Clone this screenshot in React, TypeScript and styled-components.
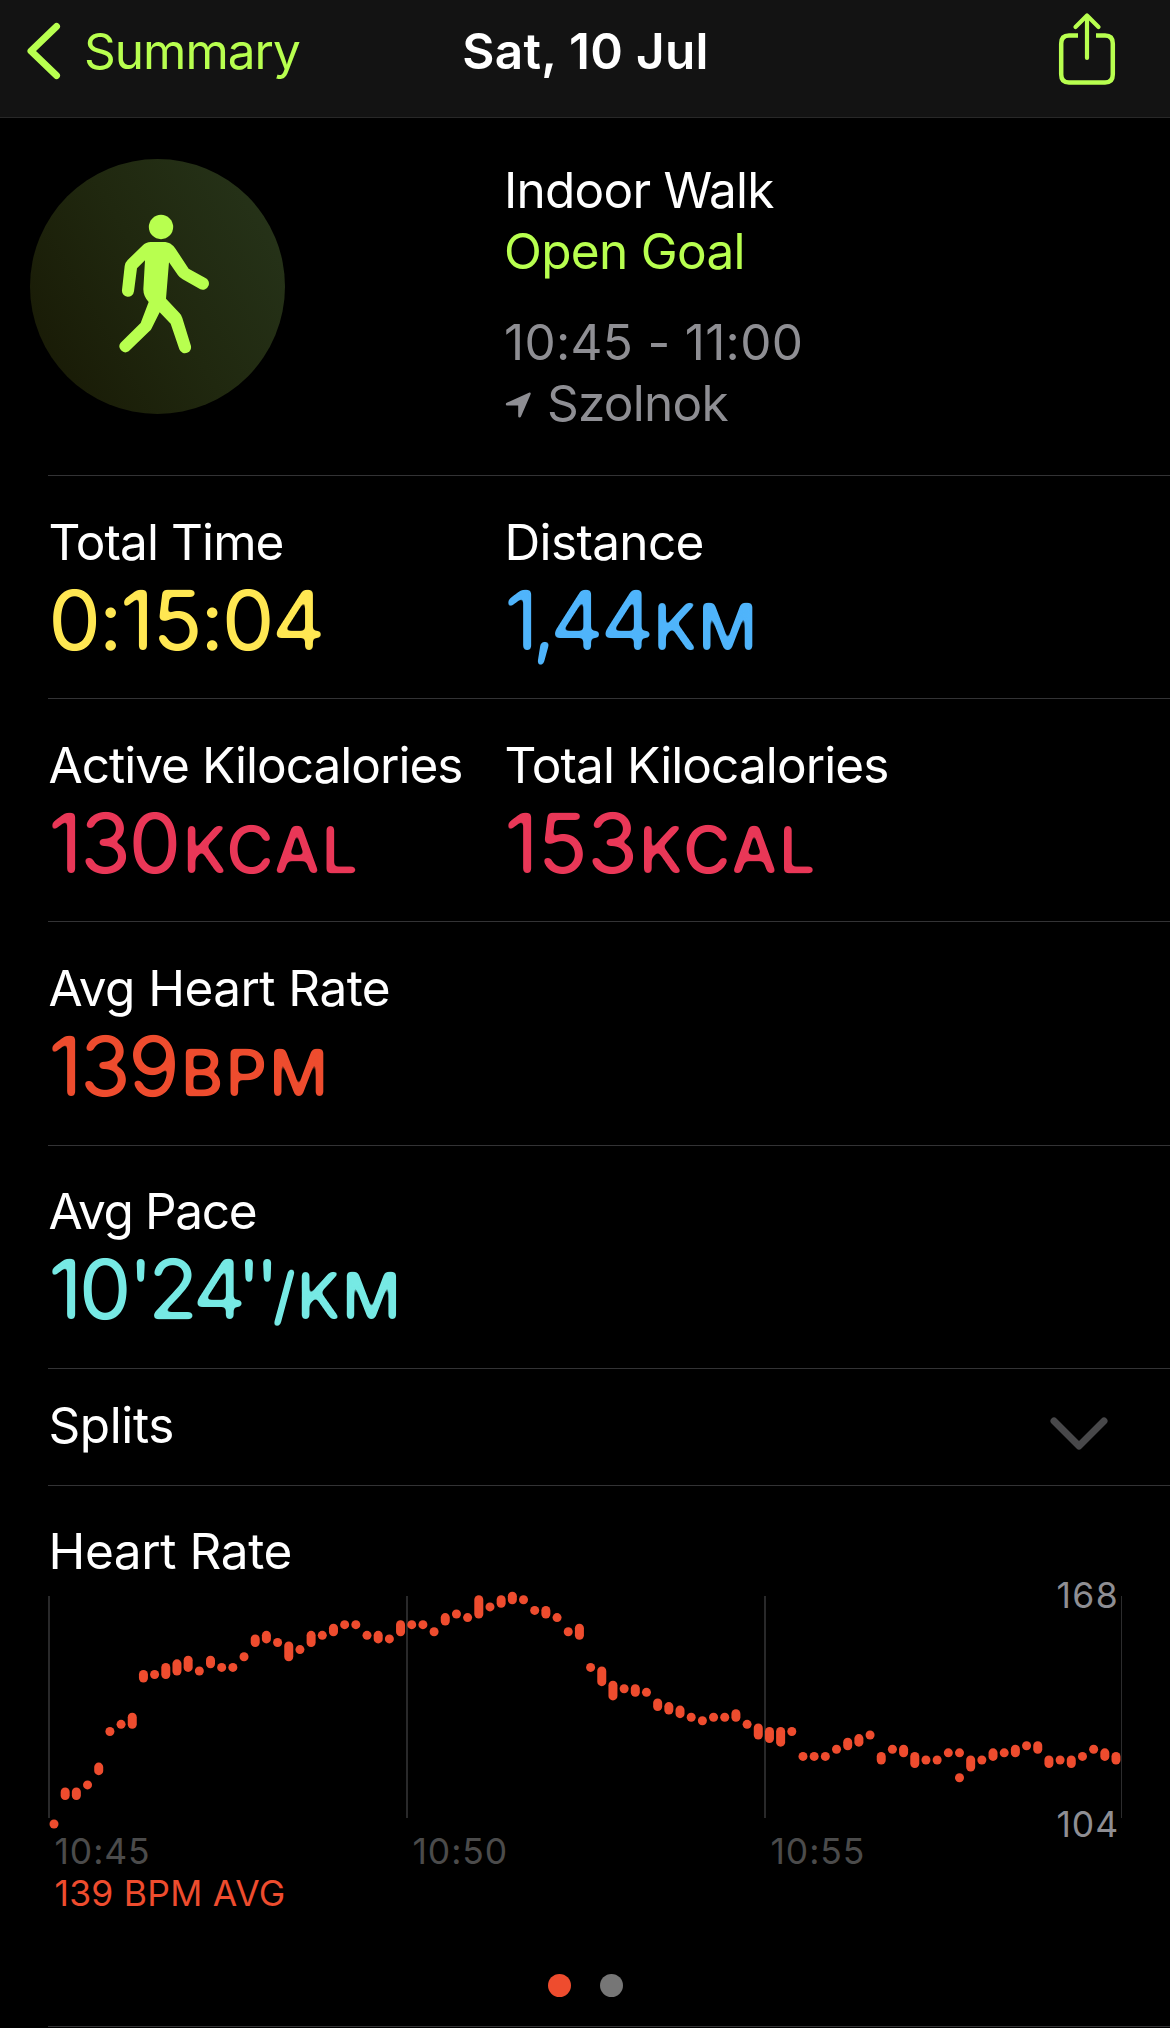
import React from 'react';
import styled, { createGlobalStyle } from 'styled-components';

const GlobalStyle = createGlobalStyle`
  * { box-sizing: border-box; }
  body {
    margin: 0;
    background: #000;
    font-family: Inter, "Liberation Sans", sans-serif;
    color: #fff;
  }
`;

const LIME = '#b8ff4f';
const ORANGE = '#ee4c2e';
const GREY = '#8e8e93';
const LINE = '#333335';

const Screen = styled.main`
  width: 1170px;
  height: 2028px;
  overflow: hidden;
  display: flex;
  flex-direction: column;
  background: #000;
`;

const NavBar = styled.header`
  height: 118px;
  flex: none;
  display: grid;
  grid-template-columns: 1fr auto 1fr;
  align-items: start;
  background: #131313;
  border-bottom: 1px solid #282828;
`;

const BackButton = styled.div`
  display: flex;
  align-items: center;
  gap: 22px;
  height: 102px;
  padding-left: 26px;
`;

const ShareButton = styled.div`
  justify-self: end;
  padding: 11px 53px 0 0;
  line-height: 0;
`;

const Text = styled.span<{ $color?: string; $track?: number; $weight?: number }>`
  display: block;
  white-space: nowrap;
  font-size: 49.5px;
  line-height: 60px;
  font-weight: ${(p) => p.$weight ?? 400};
  color: ${(p) => p.$color ?? '#fff'};
  letter-spacing: ${(p) => p.$track ?? 0}px;
`;

const NavTitle = styled(Text)`
  margin: 21px 0 0 1px;
`;

const Workout = styled.section`
  height: 357px;
  flex: none;
  display: grid;
  grid-template-columns: 474px 1fr;
  padding: 41px 0 0 30px;
`;

const Badge = styled.div`
  width: 255px;
  height: 255px;
  border-radius: 50%;
  background: linear-gradient(60deg, #191b06 10%, #20280f 50%, #263319 92%);
`;

const Details = styled.div`
  display: flex;
  flex-direction: column;
`;

const DetailLine = styled.div<{ $gap?: number }>`
  display: flex;
  align-items: center;
  gap: 16px;
  height: 61px;
  margin-top: ${(p) => p.$gap ?? 0}px;
`;

const LocationArrow = styled.svg`
  margin: 4px 0 0 1px;
`;

const Divided = styled.section<{ $height: number }>`
  flex: none;
  height: ${(p) => p.$height}px;
  margin-left: 48px;
  border-top: 1px solid ${LINE};
`;

const StatRow = styled(Divided)<{ $top: number }>`
  display: grid;
  grid-template-columns: 456px 1fr;
  padding: ${(p) => p.$top}px 0 0 0.5px;
`;

const Stat = styled.div`
  display: flex;
  flex-direction: column;
  gap: 6px;
`;

const Value = styled.div<{ $color: string; $track: number }>`
  height: 84px;
  line-height: 84px;
  font-size: 83px;
  white-space: nowrap;
  color: ${(p) => p.$color};
  letter-spacing: ${(p) => p.$track}px;
  filter: url(#rounded-ends);
`;

const Tight = styled.span<{ $by: number }>`
  letter-spacing: ${(p) => -p.$by}px;
`;

const Unit = styled.span<{ $track: number; $lead: number }>`
  font-size: 65px;
  font-weight: 500;
  line-height: 60px;
  margin-left: ${(p) => p.$lead}px;
  letter-spacing: ${(p) => p.$track}px;
`;

const SplitsRow = styled(Divided)`
  display: flex;
  justify-content: space-between;
  padding: 26px 60px 0 0.5px;
`;

const SplitsChevron = styled.svg`
  margin-top: 20px;
`;

const ChartSection = styled(Divided)`
  padding: 35px 48px 0 0;
  display: flex;
  flex-direction: column;
`;

const ChartHead = styled.div`
  height: 75px;
  padding-left: 0.5px;
`;

const Plot = styled.div`
  display: grid;
  height: 222px;
  width: 1074px;

  > * { grid-area: 1 / 1; }
`;

const PlotSvg = styled.svg`
  overflow: visible;
`;

const Scale = styled.div`
  display: flex;
  flex-direction: column;
  justify-content: space-between;
  align-items: flex-end;
  margin: -22px 3px -29px 0;
`;

const Small = styled.span<{ $color: string; $track?: number }>`
  display: block;
  white-space: nowrap;
  font-size: 35.5px;
  line-height: 44px;
  color: ${(p) => p.$color};
  letter-spacing: ${(p) => p.$track ?? 0.9}px;
`;

const TimeAxis = styled.div`
  display: grid;
  grid-template-columns: 358px 358px 1fr;
  padding: 12px 0 0 6.5px;
`;

const AverageLine = styled.div`
  margin: -2px 0 0 6.5px;
`;

const Pager = styled.div`
  display: flex;
  justify-content: center;
  gap: 29px;
  margin: 58px 0 0 0.5px;
`;

const PageDot = styled.i<{ $active?: boolean }>`
  width: 23px;
  height: 23px;
  border-radius: 50%;
  background: ${(p) => (p.$active ? ORANGE : '#767676')};
`;

/* Each sample: [high, low] beats per minute; a single number is a steady reading. */
type Sample = number | [number, number];
const SAMPLES: Sample[] = [
  104, [113, 112], [113, 112], 115, [120, 119], 130, 132, [134, 132], [146, 145], 146,
  [148, 146], [149, 147], [150, 148], 147, [150, 149], 148, 148, 151, [156, 155], [157, 156],
  155, [154, 151], 153, [157, 155], 157, [159, 158], 160, 160, 157, [157, 156],
  156, [160, 158], 160, 160, 158, [162, 161], 163, 162, [167, 163], 165,
  [167, 166], [168, 167], 167, 164, [164, 163], 162, 158, [159, 157], 148, [147, 144],
  [143, 140], 142, [142, 141], 141, [138, 137], [137, 136], [136, 135], 134, 133, 134,
  134, [135, 134], 132, [131, 129], [130, 128], [130, 127], 130, 123, 123, 123,
  125, [127, 126], [128, 127], 129, [123, 122], 125, [125, 124], [123, 121], 122, 122,
  124, 124, [122, 120], 122, [124, 123], 124, [125, 124], 126, [126, 125], [122, 121],
  122, [122, 121], 123, 125, [124, 123], [123, 122],
];
const OUTLIERS: [number, number][] = [[81, 117]];

const sampleX = (i: number) => 6 + i * (1062 / 95);
const bpmY = (bpm: number) => 0.2 + (168 - bpm) * 3.56;

function HeartRatePlot() {
  const marks: [number, number, number][] = [
    ...SAMPLES.map((s, i): [number, number, number] =>
      typeof s === 'number' ? [i, s, s] : [i, s[0], s[1]]),
    ...OUTLIERS.map(([i, b]): [number, number, number] => [i, b, b]),
  ];
  return (
    <PlotSvg width="1074" height="222" viewBox="0 0 1074 222">
      {[0, 358, 716].map((x) => (
        <rect key={x} x={x} y="0" width="2" height="222" fill="#29292a" />
      ))}
      <rect x="1073" y="0" width="1" height="222" fill="#2c2c2d" />
      {marks.map(([i, hi, lo], k) => (
        <rect
          key={k}
          x={sampleX(i) - 4.5}
          y={bpmY(hi) - 4.5}
          width="9"
          height={9 + bpmY(lo) - bpmY(hi)}
          rx="4.5"
          fill={ORANGE}
        />
      ))}
    </PlotSvg>
  );
}

function Walker() {
  return (
    <svg width="255" height="255" viewBox="90 87 765 765" fill={LIME} stroke="none">
      <circle cx="483" cy="291" r="36.5" />
      <path d="M452 336H490C507 336 519 344 527 357L566 416L615 443A18 18 0 0 1 601 478L548 448Q539 443 534 436L507 397L498 506L539 550Q545 556 547 564L572 645A18 18 0 0 1 538 658L512 581L479 547L454 597Q452 601 448 604L386 664A18 18 0 0 1 362 638L422 579L446 516Q430 499 430 478L435 391L411 415L402 484A18 18 0 0 1 366 480L374 408Q375 398 383 390L427 347Q438 336 452 336Z" />
    </svg>
  );
}

interface StatData {
  label: string;
  track: number;
  /* Runs of characters; [run, n] is followed by n pixels less space than normal. */
  value: (string | [string, number])[];
  valueTrack: number;
  unit?: string;
  unitTrack?: number;
  lead?: number;
  color: string;
}

const ROWS: { height: number; top: number; stats: StatData[] }[] = [
  {
    height: 223,
    top: 36,
    stats: [
      { label: 'Total Time', track: -0.9, value: ['0:15:04'], valueTrack: -2.2, color: '#ffe752' },
      { label: 'Distance', track: -0.65, value: [['1', 6], [',', 6], '44'], valueTrack: -3.1, unit: 'KM', unitTrack: 0, lead: 2, color: '#4fb4fb' },
    ],
  },
  {
    height: 223,
    top: 36,
    stats: [
      { label: 'Active Kilocalories', track: -0.98, value: ['130'], valueTrack: -2.4, unit: 'KCAL', unitTrack: 1.4, lead: 4, color: '#e93757' },
      { label: 'Total Kilocalories', track: -0.9, value: ['153'], valueTrack: -1, unit: 'KCAL', unitTrack: 1.8, lead: 2, color: '#e93757' },
    ],
  },
  {
    height: 224,
    top: 36,
    stats: [{ label: 'Avg Heart Rate', track: -0.55, value: ['139'], valueTrack: -2.7, unit: 'BPM', unitTrack: 2, lead: 3.8, color: ORANGE }],
  },
  {
    height: 223,
    top: 35,
    stats: [{ label: 'Avg Pace', track: -1.35, value: [['10', 3.2], ["'", 5.5], ['2', 5.5], ['4', 10], ["'", 6.5], ["'", 7.5]], valueTrack: -4, unit: '/KM', unitTrack: 0.5, lead: 0, color: '#76e9e4' }],
  },
];

export default function App() {
  return (
    <Screen>
      <GlobalStyle />
      <svg width="0" height="0" style={{ position: 'absolute' }}>
        <filter id="rounded-ends" x="-5%" y="-10%" width="110%" height="120%" colorInterpolationFilters="sRGB">
          <feGaussianBlur stdDeviation="2.1" />
          <feComponentTransfer>
            <feFuncA type="linear" slope="6" intercept="-2.3" />
          </feComponentTransfer>
        </filter>
      </svg>

      <NavBar>
        <BackButton>
          <svg width="36" height="60" viewBox="0 0 36 60" fill="none" stroke={LIME} strokeWidth="7" strokeLinecap="round" strokeLinejoin="round">
            <path d="M30.5 5.5L5 30L30.5 54.5" />
          </svg>
          <Text $color={LIME} $track={-1}>Summary</Text>
        </BackButton>
        <NavTitle $weight={600} $track={0.3}>Sat, 10 Jul</NavTitle>
        <ShareButton>
          <svg width="60" height="76" viewBox="0 0 60 76" fill="none" stroke={LIME} strokeWidth="4.5">
            <path d="M21 24.5H12Q4.2 24.5 4.2 32.5V63.5Q4.2 71.5 12 71.5H48Q55.8 71.5 55.8 63.5V32.5Q55.8 24.5 48 24.5H39" />
            <path d="M30 5V47M18.500 16L30 4.500L41.500 16" strokeLinecap="round" strokeLinejoin="round" strokeWidth="4.200" />
          </svg>
        </ShareButton>
      </NavBar>

      <Workout>
        <Badge><Walker /></Badge>
        <Details>
          <DetailLine><Text $track={-0.75}>Indoor Walk</Text></DetailLine>
          <DetailLine><Text $color={LIME} $track={-0.7}>Open Goal</Text></DetailLine>
          <DetailLine $gap={30}><Text $color={GREY} $track={0.3}>10:45 - 11:00</Text></DetailLine>
          <DetailLine>
            <LocationArrow width="26" height="26" viewBox="0 0 26 26" fill={GREY}>
              <path d="M24.500 .5Q26.200 .4 25.600 2.200L16 24.600Q15.600 25.500 14.600 25.500Q13.200 25.500 13.200 24.200V13.500H2Q.8 13.500 .8 12.200Q.8 11.300 1.800 10.800Z" />
            </LocationArrow>
            <Text $color={GREY} $track={-0.75}>Szolnok</Text>
          </DetailLine>
        </Details>
      </Workout>

      {ROWS.map((row) => (
        <StatRow key={row.stats[0].label} $height={row.height} $top={row.top}>
          {row.stats.map((s) => (
            <Stat key={s.label}>
              <Text $track={s.track}>{s.label}</Text>
              <Value $color={s.color} $track={s.valueTrack}>
                {s.value.map((part, i) =>
                  typeof part === 'string' ? part : <Tight key={i} $by={part[1]}>{part[0]}</Tight>)}
                {s.unit && <Unit $track={s.unitTrack ?? 0} $lead={s.lead ?? 0}>{s.unit}</Unit>}
              </Value>
            </Stat>
          ))}
        </StatRow>
      ))}

      <SplitsRow $height={117}>
        <Text $track={-0.4}>Splits</Text>
        <SplitsChevron width="62" height="40" viewBox="0 0 62 40" fill="none" stroke="#48484a" strokeWidth="7" strokeLinecap="round" strokeLinejoin="round">
          <path d="M6 6L31 31L56 6" />
        </SplitsChevron>
      </SplitsRow>

      <ChartSection $height={541}>
        <ChartHead><Text $track={-0.4}>Heart Rate</Text></ChartHead>
        <Plot>
          <HeartRatePlot />
          <Scale>
            <Small $color={GREY} $track={1.4}>168</Small>
            <Small $color={GREY}>104</Small>
          </Scale>
        </Plot>
        <TimeAxis>
          <Small $color="#4b4b4b">10:45</Small>
          <Small $color="#4b4b4b">10:50</Small>
          <Small $color="#4b4b4b">10:55</Small>
        </TimeAxis>
        <AverageLine><Small $color={ORANGE} $track={0.25}>139 BPM AVG</Small></AverageLine>
        <Pager><PageDot $active /><PageDot /></Pager>
      </ChartSection>
      <Divided $height={2} />
    </Screen>
  );
}
